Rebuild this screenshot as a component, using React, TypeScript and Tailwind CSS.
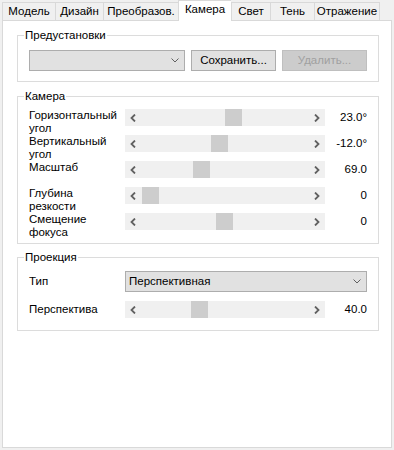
import React from 'react';

const tabs = [
  { name: 'Модель', w: 'w-[53px]' },
  { name: 'Дизайн', w: 'w-[48px]' },
  { name: 'Преобразов.', w: 'w-[75px]' },
  { name: 'Камера', w: 'w-[53px]', active: true },
  { name: 'Свет', w: 'w-[39px]' },
  { name: 'Тень', w: 'w-[44px]' },
  { name: 'Отражение', w: 'w-[66px]', last: true },
];

const cameraRows = [
  { label: ['Горизонтальный', 'угол'], thumb: 100, value: '23.0°' },
  { label: ['Вертикальный', 'угол'], thumb: 86, value: '-12.0°' },
  { label: ['Масштаб'], thumb: 68, value: '69.0' },
  { label: ['Глубина', 'резкости'], thumb: 17, value: '0' },
  { label: ['Смещение', 'фокуса'], thumb: 91, value: '0' },
];

const Chevron = () => (
  <svg width="8" height="5" viewBox="0 0 8 5" className="shrink-0">
    <path d="M0.5 0.5 L4 4 L7.5 0.5" fill="none" stroke="#606060" strokeWidth="1" />
  </svg>
);

const Arrow = ({ dir }: { dir: 'left' | 'right' }) => (
  <svg width="6" height="8" viewBox="0 0 6 8" className="shrink-0">
    <path
      d={dir === 'left' ? 'M5 0.5 L1.5 4 L5 7.5' : 'M1 0.5 L4.5 4 L1 7.5'}
      fill="none"
      stroke="#606060"
      strokeWidth="1.8"
    />
  </svg>
);

const Slider = ({ thumb }: { thumb: number }) => (
  <div className="relative w-[200px] h-[17px] bg-[#f0f0f0] flex items-center justify-between px-[5px] shrink-0">
    <Arrow dir="left" />
    <Arrow dir="right" />
    <div className="absolute top-0 h-[17px] w-[17px] bg-[#cdcdcd]" style={{ left: thumb }} />
  </div>
);

const Group = ({ title, className, children }: { title: string; className?: string; children: React.ReactNode }) => (
  <fieldset className={`w-[362px] ml-[14px] border border-[#dcdcdc] ${className ?? ''}`}>
    <legend className="ml-[6px] px-[1px] leading-[14px]">{title}</legend>
    {children}
  </fieldset>
);

export default function App() {
  return (
    <div
      className="w-[394px] h-[450px] bg-[#f0f0f0] text-[11.5px] text-black px-[2px] flex flex-col"
      style={{ fontFamily: '"Liberation Sans", Arial, sans-serif' }}
    >
      {/* Tabs */}
      <div className="flex items-end h-[20px] relative z-10">
        {tabs.map((t) => (
          <div
            key={t.name}
            className={`${t.w} flex items-center justify-center border-t border-l border-[#d9d9d9] ${
              t.last ? 'border-r' : ''
            } ${t.active ? 'h-[21px] -mb-px bg-white pb-[3px]' : 'h-[18px] bg-[#f0f0f0]'}`}
          >
            {t.name}
          </div>
        ))}
      </div>

      {/* Pane */}
      <div className="w-[390px] h-[428px] bg-white border border-[#d9d9d9] pt-[7px]">
        <Group title="Предустановки">
          <div className="flex gap-[6px] pl-[11px] pt-[8px] pb-[10px]">
            <div className="w-[156px] h-[21px] bg-[#e1e1e1] border border-[#adadad] flex items-center justify-end pr-[5px]">
              <Chevron />
            </div>
            <div className="w-[85px] h-[21px] bg-[#e1e1e1] border border-[#adadad] flex items-center justify-center">
              Сохранить...
            </div>
            <div className="w-[85px] h-[21px] bg-[#cccccc] border border-[#bfbfbf] text-[#a0a0a0] flex items-center justify-center">
              Удалить...
            </div>
          </div>
        </Group>

        <Group title="Камера" className="mt-[7px]">
          <div className="pl-[11px] pt-[5px] pb-[5px]">
            {cameraRows.map((r) => (
              <div key={r.value + r.label[0]} className="flex h-[26px] pt-[1px]">
                <div className="w-[96px] leading-[13px] whitespace-nowrap">
                  {r.label.map((l) => (
                    <div key={l}>{l}</div>
                  ))}
                </div>
                <Slider thumb={r.thumb} />
                <div className="w-[42px] h-[17px] flex items-center justify-end">{r.value}</div>
              </div>
            ))}
          </div>
        </Group>

        <Group title="Проекция" className="mt-[6px]">
          <div className="pl-[11px] pt-[7px] pb-[12px]">
            <div className="flex h-[21px] items-center">
              <div className="w-[96px]">Тип</div>
              <div className="w-[242px] h-[21px] bg-[#e1e1e1] border border-[#adadad] flex items-center justify-between pl-[3px] pr-[5px]">
                <span>Перспективная</span>
                <Chevron />
              </div>
            </div>
            <div className="flex h-[17px] mt-[9px] items-center">
              <div className="w-[96px]">Перспектива</div>
              <Slider thumb={66} />
              <div className="w-[42px] text-right">40.0</div>
            </div>
          </div>
        </Group>
      </div>
    </div>
  );
}
